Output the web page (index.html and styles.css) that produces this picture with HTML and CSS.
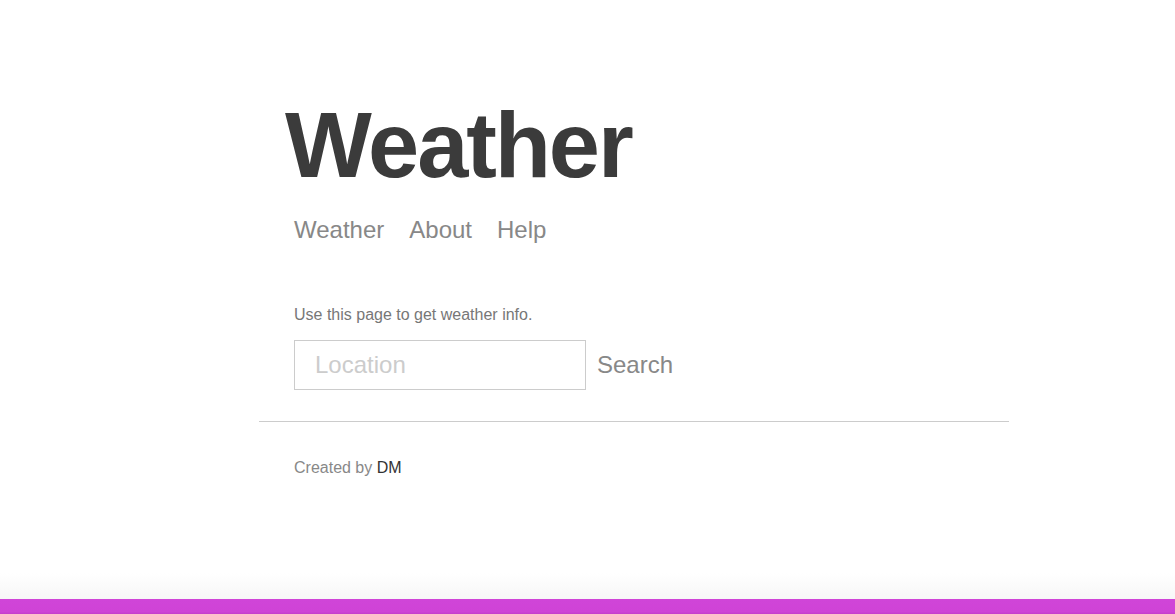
FILE: index.html
```html
<!DOCTYPE html>
<html lang="en">
<head>
<meta charset="utf-8">
<title>Weather</title>
<link rel="stylesheet" href="styles.css">
</head>
<body>
<div class="page">
  <header class="header">
    <h1 class="title">Weather</h1>
    <nav class="nav">
      <a class="nav-link" href="#">Weather</a>
      <a class="nav-link" href="#">About</a>
      <a class="nav-link" href="#">Help</a>
    </nav>
  </header>
  <main class="main">
    <p class="intro">Use this page to get weather info.</p>
    <form class="search-form">
      <input class="search-input" type="text" placeholder="Location">
      <button class="search-button" type="button">Search</button>
    </form>
  </main>
  <footer class="footer">
    <p class="credit">Created by <span class="author">DM</span></p>
  </footer>
</div>
<div class="bottom-shade"></div>
<div class="bottom-bar"></div>
</body>
</html>
```
FILE: styles.css
```css
html, body {
  margin: 0;
  padding: 0;
  background: #ffffff;
}
body {
  font-family: "Liberation Sans", Helvetica, Arial, sans-serif;
  color: #777;
}
.page {
  width: 750px;
  margin-left: 259px;
  padding-top: 99px;
}
.header {
  padding: 0 35px;
}
.title {
  margin: 0;
  font-size: 92px;
  line-height: 93px;
  font-weight: bold;
  letter-spacing: -2.1px;
  color: #3b3b3b;
  margin-left: -9px;
}
.nav {
  display: flex;
  gap: 25px;
  margin-top: 26px;
}
.nav-link {
  font-size: 24px;
  line-height: 24px;
  color: #888;
  text-decoration: none;
}
.main {
  padding: 0 35px;
  margin-top: 65px;
}
.intro {
  margin: 0;
  font-size: 16px;
  line-height: 16px;
  color: #777;
}
.search-form {
  display: flex;
  align-items: center;
  gap: 11px;
  margin-top: 17px;
}
.search-input {
  box-sizing: border-box;
  width: 292px;
  height: 50px;
  border: 1px solid #cccccc;
  padding: 0 20px;
  font-family: inherit;
  font-size: 24px;
  color: #555;
  outline: none;
  margin: 0;
}
.search-input::placeholder {
  color: #cccccc;
}
.search-button {
  background: none;
  border: none;
  padding: 0;
  margin: 0;
  font-family: inherit;
  font-size: 24px;
  color: #888;
  cursor: pointer;
}
.footer {
  margin-top: 31px;
  border-top: 1px solid #cccccc;
  padding: 38px 35px 0;
}
.credit {
  margin: 0;
  font-size: 16px;
  line-height: 16px;
  color: #888;
}
.author {
  color: #333;
}
.bottom-shade {
  position: fixed;
  left: 0;
  right: 0;
  bottom: 15px;
  height: 26px;
  background: linear-gradient(to bottom, #ffffff, #f7f7f7);
}
.bottom-bar {
  position: fixed;
  left: 0;
  right: 0;
  bottom: 0;
  height: 15px;
  background: linear-gradient(to bottom, #d045d8 0%, #cf43d6 85%, #c33dcb 100%);
}
```
